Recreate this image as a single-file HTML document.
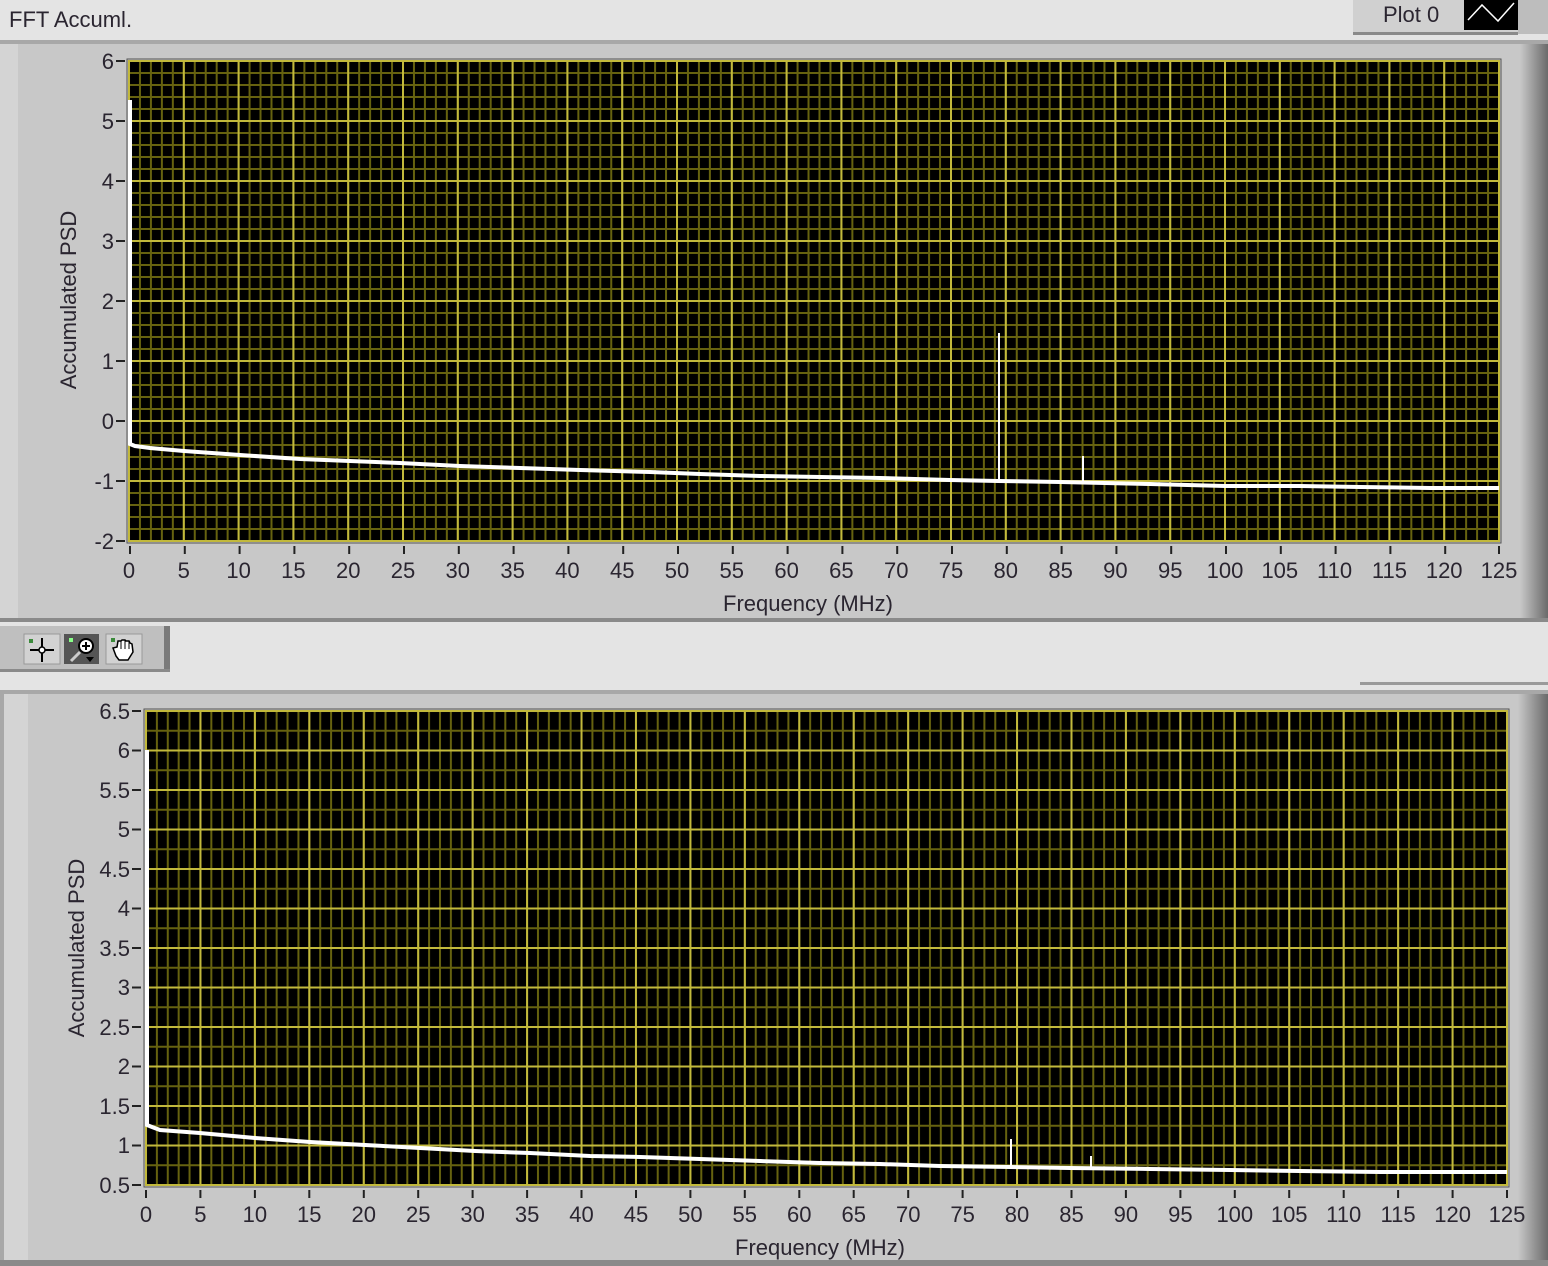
<!DOCTYPE html>
<html><head><meta charset="utf-8"><style>
html,body{margin:0;padding:0;width:1548px;height:1266px;overflow:hidden;background:#e4e4e4}
svg{display:block}
text{font-family:"Liberation Sans",sans-serif;fill:#2a2530}
</style></head><body>
<svg width="1548" height="1266" viewBox="0 0 1548 1266">
<defs>
<pattern id="tmx" patternUnits="userSpaceOnUse" x="128" y="0" width="10.96" height="10"><rect x="0" y="0" width="2" height="10" fill="#66620f"/></pattern>
<pattern id="tmy" patternUnits="userSpaceOnUse" x="0" y="60" width="10" height="12"><rect x="0" y="0" width="10" height="2" fill="#66620f"/></pattern>
<pattern id="tMx" patternUnits="userSpaceOnUse" x="128" y="0" width="54.8" height="10"><rect x="0" y="0" width="2" height="10" fill="#c2b93c"/></pattern>
<pattern id="tMy" patternUnits="userSpaceOnUse" x="0" y="60" width="10" height="60"><rect x="0" y="0" width="10" height="2" fill="#c2b93c"/></pattern>
<pattern id="bmx" patternUnits="userSpaceOnUse" x="145" y="0" width="10.888" height="10"><rect x="0" y="0" width="2" height="10" fill="#66620f"/></pattern>
<pattern id="bmy" patternUnits="userSpaceOnUse" x="0" y="710" width="10" height="19.75"><rect x="0" y="0" width="10" height="2" fill="#66620f"/></pattern>
<pattern id="bMx" patternUnits="userSpaceOnUse" x="145" y="0" width="54.44" height="10"><rect x="0" y="0" width="2" height="10" fill="#c2b93c"/></pattern>
<pattern id="bMy" patternUnits="userSpaceOnUse" x="0" y="710" width="10" height="39.5"><rect x="0" y="0" width="10" height="2" fill="#c2b93c"/></pattern>
<linearGradient id="redge" x1="0" x2="1"><stop offset="0" stop-color="#c8c8c8"/><stop offset="1" stop-color="#6a6a6a"/></linearGradient>
</defs>

<rect x="0" y="0" width="1548" height="40" fill="#e4e4e4"/>
<text x="9" y="27" font-size="22">FFT Accuml.</text>
<rect x="1353" y="0" width="165" height="34" fill="#d0d0d0"/>
<rect x="1353" y="32" width="165" height="3" fill="#8a8a8a"/>
<text x="1383" y="22" font-size="22">Plot 0</text>
<rect x="1464" y="0" width="54" height="30" fill="#000"/>
<path d="M1468 20 L1482 5 L1498 21 L1514 3" stroke="#fff" stroke-width="1.5" fill="none"/>
<rect x="1518" y="0" width="30" height="34" fill="#bdbdbd"/>

<rect x="0" y="40" width="1548" height="582" fill="#a8a8a8"/>
<rect x="0" y="44" width="1520" height="574" fill="#c8c8c8"/>
<rect x="0" y="44" width="18" height="574" fill="#d4d4d4"/>
<rect x="1520" y="44" width="28" height="578" fill="url(#redge)"/>
<rect x="0" y="618" width="1548" height="4" fill="#8a8a8a"/>
<rect x="128" y="60" width="1372" height="482" fill="#000"/>
<rect x="128" y="60" width="1372" height="482" fill="url(#tmx)"/>
<rect x="128" y="60" width="1372" height="482" fill="url(#tmy)"/>
<rect x="128" y="60" width="1372" height="482" fill="url(#tMx)"/>
<rect x="128" y="60" width="1372" height="482" fill="url(#tMy)"/>
<rect x="127" y="59" width="1374" height="484" fill="none" stroke="#555" stroke-width="1"/>
<path d="M130 100 L130 444 L135 446 L150 448 L184 451 L240 455 L300 459 L350 461 L400 463 L460 466 L520 468 L580 470 L650 472 L700 474 L760 476 L820 477 L880 478 L950 480 L998 481 L1060 482 L1150 484 L1225 486 L1300 486 L1360 487 L1430 488 L1499 488" stroke="#fff" stroke-width="4" fill="none"/>
<path d="M999 333 L999 481 M1083 456 L1083 483" stroke="#fff" stroke-width="2"/>
<g stroke="#222" stroke-width="2">
<path d="M116 61h9M116 121h9M116 181h9M116 241h9M116 301h9M116 361h9M116 421h9M116 481h9M116 541h9"/>
</g>
<g font-size="22" text-anchor="end">
<text x="114" y="69">6</text><text x="114" y="129">5</text><text x="114" y="189">4</text><text x="114" y="249">3</text><text x="114" y="309">2</text><text x="114" y="369">1</text><text x="114" y="429">0</text><text x="114" y="489">-1</text><text x="114" y="549">-2</text>
</g>
<text transform="translate(76,300) rotate(-90)" font-size="22" text-anchor="middle">Accumulated PSD</text>
<g font-size="22" text-anchor="middle">
<text x="129" y="578">0</text><text x="183.8" y="578">5</text><text x="238.6" y="578">10</text><text x="293.4" y="578">15</text><text x="348.2" y="578">20</text><text x="403" y="578">25</text><text x="457.8" y="578">30</text><text x="512.6" y="578">35</text><text x="567.4" y="578">40</text><text x="622.2" y="578">45</text><text x="677" y="578">50</text><text x="731.8" y="578">55</text><text x="786.6" y="578">60</text><text x="841.4" y="578">65</text><text x="896.2" y="578">70</text><text x="951" y="578">75</text><text x="1005.8" y="578">80</text><text x="1060.6" y="578">85</text><text x="1115.4" y="578">90</text><text x="1170.2" y="578">95</text><text x="1225" y="578">100</text><text x="1279.8" y="578">105</text><text x="1334.6" y="578">110</text><text x="1389.4" y="578">115</text><text x="1444.2" y="578">120</text><text x="1499" y="578">125</text>
<text x="808" y="611">Frequency (MHz)</text>
</g>
<g stroke="#222" stroke-width="2"><path d="M130 546v8M184.8 546v8M239.6 546v8M294.4 546v8M349.2 546v8M404 546v8M458.8 546v8M513.6 546v8M568.4 546v8M623.2 546v8M678 546v8M732.8 546v8M787.6 546v8M842.4 546v8M897.2 546v8M952 546v8M1006.8 546v8M1061.6 546v8M1116.4 546v8M1171.2 546v8M1226 546v8M1280.8 546v8M1335.6 546v8M1390.4 546v8M1445.2 546v8M1499 546v8"/></g>

<rect x="0" y="626" width="170" height="46" fill="#bfbfbf"/>
<rect x="164" y="626" width="6" height="46" fill="#7a7a7a"/>
<rect x="0" y="669" width="170" height="3" fill="#8a8a8a"/>
<rect x="24" y="634" width="36" height="30" fill="#d2d2d2" stroke="#999"/>
<path d="M30 650h24M42 638v24" stroke="#000" stroke-width="2"/><circle cx="42" cy="650" r="3" fill="#fff" stroke="#000" stroke-width="1.5"/>
<rect x="29" y="639" width="4" height="4" fill="#3a8a3a"/>
<rect x="64" y="634" width="35" height="30" fill="#555"/>
<circle cx="86" cy="646" r="7" fill="#fff" stroke="#000" stroke-width="2"/><path d="M82 646h8M86 642v8" stroke="#000" stroke-width="2"/><path d="M80 652l-9 9" stroke="#ccc" stroke-width="3"/><path d="M86 657h8l-4 5z" fill="#000"/>
<rect x="69" y="638" width="4" height="4" fill="#8f8"/>
<rect x="106" y="634" width="36" height="30" fill="#d2d2d2" stroke="#999"/>
<path d="M116 656 L113 648 L117 647 L118 641 L121 641 L122 640 L125 640 L126 641 L129 641 L130 643 L132 644 L133 652 L128 660 L119 660 Z" fill="#fff" stroke="#000" stroke-width="1.5"/>
<path d="M121 641v8M125 640v9M129 641v8" stroke="#000" stroke-width="1"/>
<rect x="111" y="638" width="4" height="4" fill="#3a8a3a"/>
<rect x="1360" y="682" width="188" height="3" fill="#9a9a9a"/>

<rect x="0" y="690" width="1548" height="576" fill="#a8a8a8"/>
<rect x="4" y="694" width="1514" height="566" fill="#c8c8c8"/>
<rect x="4" y="694" width="24" height="566" fill="#d4d4d4"/>
<rect x="1518" y="694" width="30" height="572" fill="url(#redge)"/>
<rect x="0" y="1260" width="1548" height="6" fill="#8a8a8a"/>
<rect x="145" y="710" width="1363" height="476" fill="#000"/>
<rect x="145" y="710" width="1363" height="476" fill="url(#bmx)"/>
<rect x="145" y="710" width="1363" height="476" fill="url(#bmy)"/>
<rect x="145" y="710" width="1363" height="476" fill="url(#bMx)"/>
<rect x="145" y="710" width="1363" height="476" fill="url(#bMy)"/>
<rect x="144" y="709" width="1365" height="478" fill="none" stroke="#555" stroke-width="1"/>
<path d="M147 750 L147 1125 L152 1127 L160 1130 L200 1133 L255 1138 L310 1142 L365 1145 L420 1148 L475 1151 L530 1153 L590 1156 L640 1157 L700 1159 L760 1161 L820 1163 L880 1164 L940 1166 L1010 1167 L1070 1168 L1150 1169 L1230 1170 L1300 1171 L1380 1172 L1507 1172" stroke="#fff" stroke-width="4" fill="none"/>
<path d="M1011 1139 L1011 1167 M1091 1156 L1091 1168" stroke="#fff" stroke-width="2"/>
<g stroke="#222" stroke-width="2">
<path d="M132 711h9M132 750.5h9M132 790h9M132 829.5h9M132 869h9M132 908.5h9M132 948h9M132 987.5h9M132 1027h9M132 1066.5h9M132 1106h9M132 1145.5h9M132 1185h9"/>
</g>
<g font-size="22" text-anchor="end">
<text x="130" y="719">6.5</text><text x="130" y="758">6</text><text x="130" y="798">5.5</text><text x="130" y="837">5</text><text x="130" y="877">4.5</text><text x="130" y="916">4</text><text x="130" y="956">3.5</text><text x="130" y="995">3</text><text x="130" y="1035">2.5</text><text x="130" y="1074">2</text><text x="130" y="1114">1.5</text><text x="130" y="1153">1</text><text x="130" y="1193">0.5</text>
</g>
<text transform="translate(84,948) rotate(-90)" font-size="22" text-anchor="middle">Accumulated PSD</text>
<g font-size="22" text-anchor="middle">
<text x="146" y="1222">0</text><text x="200.4" y="1222">5</text><text x="254.9" y="1222">10</text><text x="309.3" y="1222">15</text><text x="363.8" y="1222">20</text><text x="418.2" y="1222">25</text><text x="472.6" y="1222">30</text><text x="527.1" y="1222">35</text><text x="581.5" y="1222">40</text><text x="636" y="1222">45</text><text x="690.4" y="1222">50</text><text x="744.8" y="1222">55</text><text x="799.3" y="1222">60</text><text x="853.7" y="1222">65</text><text x="908.2" y="1222">70</text><text x="962.6" y="1222">75</text><text x="1017" y="1222">80</text><text x="1071.5" y="1222">85</text><text x="1125.9" y="1222">90</text><text x="1180.4" y="1222">95</text><text x="1234.8" y="1222">100</text><text x="1289.2" y="1222">105</text><text x="1343.7" y="1222">110</text><text x="1398.1" y="1222">115</text><text x="1452.6" y="1222">120</text><text x="1507" y="1222">125</text>
<text x="820" y="1255">Frequency (MHz)</text>
</g>
<g stroke="#222" stroke-width="2"><path d="M146 1190v8M200.4 1190v8M254.9 1190v8M309.3 1190v8M363.8 1190v8M418.2 1190v8M472.6 1190v8M527.1 1190v8M581.5 1190v8M636 1190v8M690.4 1190v8M744.8 1190v8M799.3 1190v8M853.7 1190v8M908.2 1190v8M962.6 1190v8M1017 1190v8M1071.5 1190v8M1125.9 1190v8M1180.4 1190v8M1234.8 1190v8M1289.2 1190v8M1343.7 1190v8M1398.1 1190v8M1452.6 1190v8M1507 1190v8"/></g>
</svg>
</body></html>
